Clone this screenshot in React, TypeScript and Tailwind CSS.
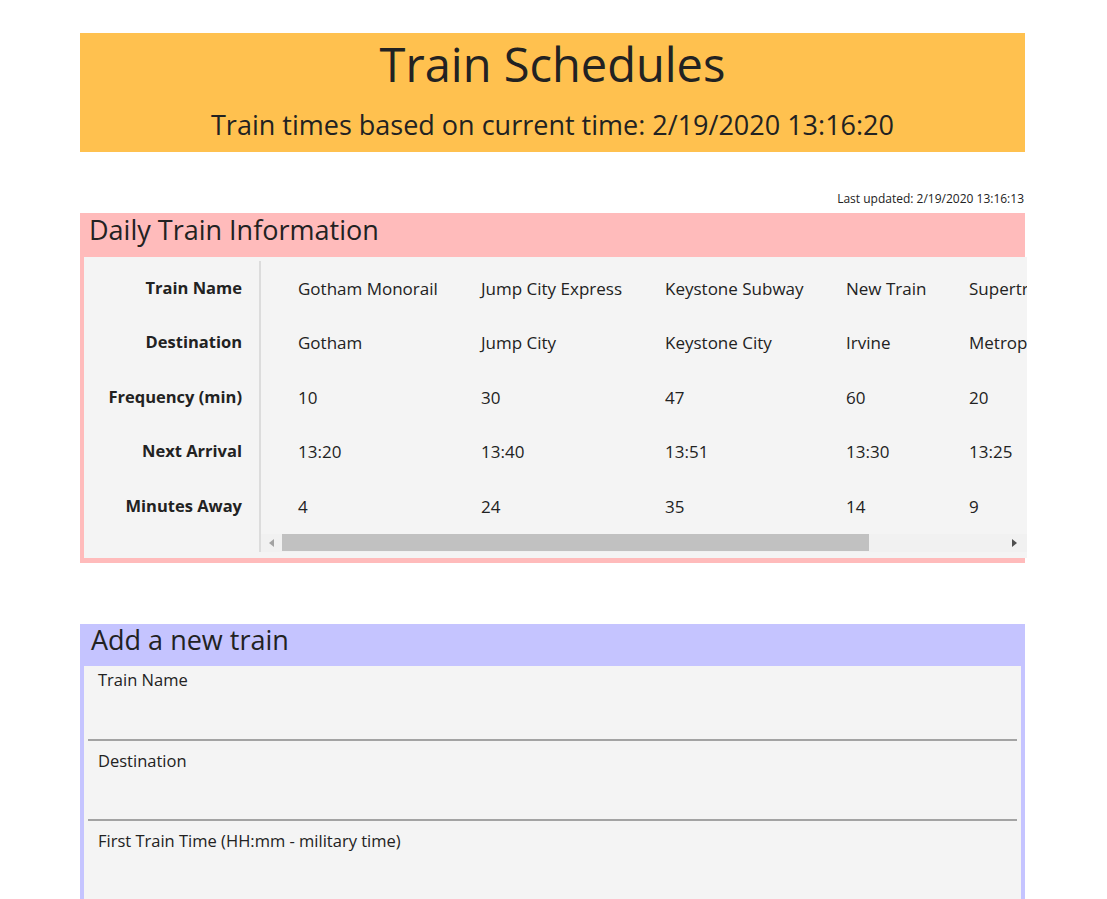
const trains = [
  { name: "Gotham Monorail", dest: "Gotham", freq: "10", next: "13:20", away: "4" },
  { name: "Jump City Express", dest: "Jump City", freq: "30", next: "13:40", away: "24" },
  { name: "Keystone Subway", dest: "Keystone City", freq: "47", next: "13:51", away: "35" },
  { name: "New Train", dest: "Irvine", freq: "60", next: "13:30", away: "14" },
  { name: "Supertrain", dest: "Metropolis", freq: "20", next: "13:25", away: "9" },
];

const colWidths = ["w-[183px]", "w-[184px]", "w-[181px]", "w-[123px]", "w-[140px]"];

const rows: { label: string; key: "name" | "dest" | "freq" | "next" | "away" }[] = [
  { label: "Train Name", key: "name" },
  { label: "Destination", key: "dest" },
  { label: "Frequency (min)", key: "freq" },
  { label: "Next Arrival", key: "next" },
  { label: "Minutes Away", key: "away" },
];

function Field({ label, first, last }: { label: string; first?: boolean; last?: boolean }) {
  return (
    <div className={`mx-[4px] ${first ? "pt-[2px] h-[75px]" : "pt-[8px] h-[80px]"} ${last ? "" : "border-b-2 border-[#a3a3a3]"}`}>
      <label className="block pl-[10px] text-[16.5px] leading-[24px] text-[#222]">{label}</label>
      <input className="w-full bg-transparent outline-none px-[10px] h-[40px]" />
    </div>
  );
}

export default function App() {
  return (
    <div className="min-h-screen bg-white text-[#222] font-['Segoe_UI','Open_Sans',sans-serif]">
      <div className="w-[945px] ml-[80px] pt-[33px]">
        <header className="bg-[#ffc14f] h-[119px] flex flex-col items-center">
          <h1 className="text-[47px] leading-[64px] mt-[-1px]">Train Schedules</h1>
          <p className="text-[27px] leading-[34px] mt-[12px]">
            Train times based on current time: 2/19/2020 13:16:20
          </p>
        </header>

        <p className="mt-[40px] text-right text-[12px] leading-[14px] pr-[1px]">
          Last updated: 2/19/2020 13:16:13
        </p>

        <section className="mt-[7px] bg-[#ffbbbb] pl-[4px] pb-[5px]">
          <h2 className="h-[44px] pl-[5px] text-[27px] leading-[34px]">Daily Train Information</h2>
          <div className="bg-[#f4f4f4] pt-[4px] pb-[6px] overflow-hidden mr-[-2px]">
            <div className="flex">
              <div className="w-[177px] shrink-0 border-r-2 border-[#dcdcdc]">
                {rows.map((r) => (
                  <div key={r.key} className="h-[54.5px] flex items-center justify-end pr-[17px] text-[16.5px] font-bold">
                    {r.label}
                  </div>
                ))}
              </div>
              <div className="flex-1 overflow-hidden">
                <div className="pl-[37px]">
                  {rows.map((r) => (
                    <div key={r.key} className="h-[54.5px] flex items-center text-[17px] whitespace-nowrap">
                      {trains.map((t, i) => (
                        <div key={t.name} className={`${colWidths[i]} shrink-0`}>
                          {t[r.key]}
                        </div>
                      ))}
                    </div>
                  ))}
                </div>
                <div className="h-[18px] bg-[#f1f1f1] flex items-center">
                  <div className="w-[21px] h-full flex items-center justify-center">
                    <svg width="6" height="8" viewBox="0 0 6 8"><path d="M5 0 L0 4 L5 8 Z" fill="#a3a3a3" /></svg>
                  </div>
                  <div className="w-[587px] h-[17px] bg-[#c1c1c1]" />
                  <div className="flex-1" />
                  <div className="w-[21px] h-full flex items-center justify-center mr-[3px]">
                    <svg width="6" height="8" viewBox="0 0 6 8"><path d="M1 0 L6 4 L1 8 Z" fill="#505050" /></svg>
                  </div>
                </div>
              </div>
            </div>
          </div>
        </section>

        <section className="mt-[61px] bg-[#c5c4ff] px-[4px]">
          <h2 className="h-[42px] pl-[7px] text-[27px] leading-[32px]">Add a new train</h2>
          <div className="bg-[#f4f4f4] pb-[20px]">
            <Field label="Train Name" first />
            <Field label="Destination" />
            <Field label="First Train Time (HH:mm - military time)" last />
          </div>
        </section>
      </div>
    </div>
  );
}
